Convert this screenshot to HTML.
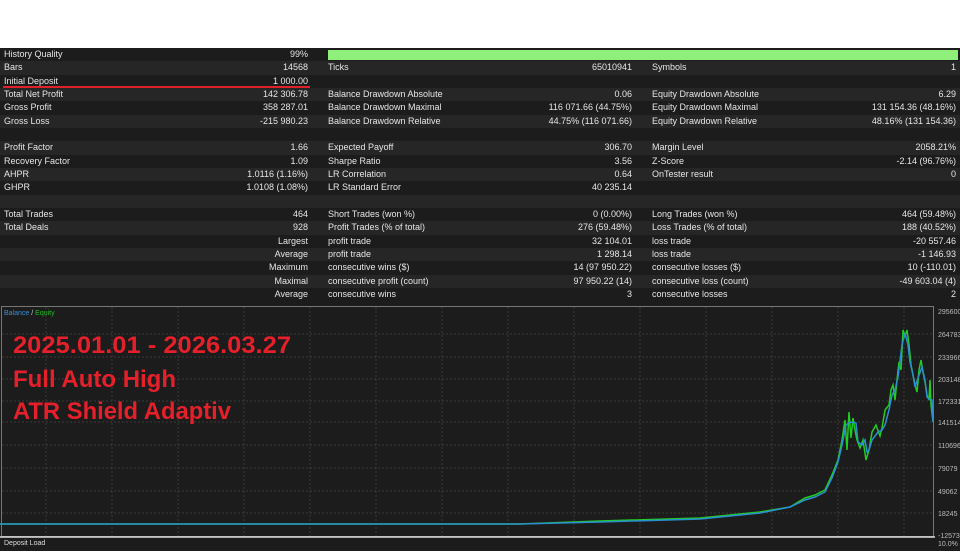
<!DOCTYPE html>
<html><head><meta charset="utf-8"><style>
*{margin:0;padding:0;box-sizing:border-box}
body{width:960px;height:551px;background:#fff;position:relative;overflow:hidden;font-family:"Liberation Sans",sans-serif;font-size:9px;color:#e6e6e6}
.tbl{position:absolute;left:0;top:48px;width:960px;height:256px;background:#1c1c1c}
.r{position:absolute;left:0;width:960px;height:13.33px;line-height:13.33px}
.r.o{background:#262626}
.r span{position:absolute;white-space:nowrap}
.l1{left:4px}.v1{right:652px;text-align:right}
.l2{left:328px}.v2{right:328px;text-align:right}
.l3{left:652px}.v3{right:4px;text-align:right}
.chart{position:absolute;left:0;top:304px;width:960px;height:247px;background:#1c1c1c}
</style></head><body>
<div class="tbl">
<div class="r" style="top:0"><span class="l1">History Quality</span><span class="v1">99%</span><span style="left:328px;top:2px;width:630px;height:10px;background:#8ef07a"></span></div>
<div class="r o" style="top:13.33px"><span class="l1">Bars</span><span class="v1">14568</span><span class="l2">Ticks</span><span class="v2">65010941</span><span class="l3">Symbols</span><span class="v3">1</span></div>
<div class="r" style="top:26.67px"><span class="l1">Initial Deposit</span><span class="v1">1 000.00</span><span style="left:3px;top:11px;width:307px;height:3px;background:#e0202a"></span></div>
<div class="r o" style="top:40px"><span class="l1">Total Net Profit</span><span class="v1">142 306.78</span><span class="l2">Balance Drawdown Absolute</span><span class="v2">0.06</span><span class="l3">Equity Drawdown Absolute</span><span class="v3">6.29</span></div>
<div class="r" style="top:53.33px"><span class="l1">Gross Profit</span><span class="v1">358 287.01</span><span class="l2">Balance Drawdown Maximal</span><span class="v2">116 071.66 (44.75%)</span><span class="l3">Equity Drawdown Maximal</span><span class="v3">131 154.36 (48.16%)</span></div>
<div class="r o" style="top:66.67px"><span class="l1">Gross Loss</span><span class="v1">-215 980.23</span><span class="l2">Balance Drawdown Relative</span><span class="v2">44.75% (116 071.66)</span><span class="l3">Equity Drawdown Relative</span><span class="v3">48.16% (131 154.36)</span></div>
<div class="r" style="top:80px"></div>
<div class="r o" style="top:93.33px"><span class="l1">Profit Factor</span><span class="v1">1.66</span><span class="l2">Expected Payoff</span><span class="v2">306.70</span><span class="l3">Margin Level</span><span class="v3">2058.21%</span></div>
<div class="r" style="top:106.67px"><span class="l1">Recovery Factor</span><span class="v1">1.09</span><span class="l2">Sharpe Ratio</span><span class="v2">3.56</span><span class="l3">Z-Score</span><span class="v3">-2.14 (96.76%)</span></div>
<div class="r o" style="top:120px"><span class="l1">AHPR</span><span class="v1">1.0116 (1.16%)</span><span class="l2">LR Correlation</span><span class="v2">0.64</span><span class="l3">OnTester result</span><span class="v3">0</span></div>
<div class="r" style="top:133.33px"><span class="l1">GHPR</span><span class="v1">1.0108 (1.08%)</span><span class="l2">LR Standard Error</span><span class="v2">40 235.14</span></div>
<div class="r o" style="top:146.67px"></div>
<div class="r" style="top:160px"><span class="l1">Total Trades</span><span class="v1">464</span><span class="l2">Short Trades (won %)</span><span class="v2">0 (0.00%)</span><span class="l3">Long Trades (won %)</span><span class="v3">464 (59.48%)</span></div>
<div class="r o" style="top:173.33px"><span class="l1">Total Deals</span><span class="v1">928</span><span class="l2">Profit Trades (% of total)</span><span class="v2">276 (59.48%)</span><span class="l3">Loss Trades (% of total)</span><span class="v3">188 (40.52%)</span></div>
<div class="r" style="top:186.67px"><span class="v1">Largest</span><span class="l2">profit trade</span><span class="v2">32 104.01</span><span class="l3">loss trade</span><span class="v3">-20 557.46</span></div>
<div class="r o" style="top:200px"><span class="v1">Average</span><span class="l2">profit trade</span><span class="v2">1 298.14</span><span class="l3">loss trade</span><span class="v3">-1 146.93</span></div>
<div class="r" style="top:213.33px"><span class="v1">Maximum</span><span class="l2">consecutive wins ($)</span><span class="v2">14 (97 950.22)</span><span class="l3">consecutive losses ($)</span><span class="v3">10 (-110.01)</span></div>
<div class="r o" style="top:226.67px"><span class="v1">Maximal</span><span class="l2">consecutive profit (count)</span><span class="v2">97 950.22 (14)</span><span class="l3">consecutive loss (count)</span><span class="v3">-49 603.04 (4)</span></div>
<div class="r" style="top:240px"><span class="v1">Average</span><span class="l2">consecutive wins</span><span class="v2">3</span><span class="l3">consecutive losses</span><span class="v3">2</span></div>
</div>
<div class="chart">
<svg width="960" height="247" viewBox="0 304 960 247" style="position:absolute;left:0;top:0">
<g stroke="#3a3a3a" stroke-dasharray="2,2" stroke-width="1">
<line x1="2" y1="334" x2="933" y2="334"/><line x1="2" y1="357" x2="933" y2="357"/><line x1="2" y1="379" x2="933" y2="379"/><line x1="2" y1="401" x2="933" y2="401"/><line x1="2" y1="422" x2="933" y2="422"/><line x1="2" y1="445" x2="933" y2="445"/><line x1="2" y1="468" x2="933" y2="468"/><line x1="2" y1="491" x2="933" y2="491"/><line x1="2" y1="513" x2="933" y2="513"/>
<line x1="46" y1="307" x2="46" y2="536"/><line x1="112" y1="307" x2="112" y2="536"/><line x1="178" y1="307" x2="178" y2="536"/><line x1="244" y1="307" x2="244" y2="536"/><line x1="310" y1="307" x2="310" y2="536"/><line x1="376" y1="307" x2="376" y2="536"/><line x1="442" y1="307" x2="442" y2="536"/><line x1="508" y1="307" x2="508" y2="536"/><line x1="574" y1="307" x2="574" y2="536"/><line x1="640" y1="307" x2="640" y2="536"/><line x1="706" y1="307" x2="706" y2="536"/><line x1="772" y1="307" x2="772" y2="536"/><line x1="838" y1="307" x2="838" y2="536"/><line x1="904" y1="307" x2="904" y2="536"/>
</g>
<rect x="1.5" y="306.5" width="932" height="230" fill="none" stroke="#777" stroke-width="1"/>
<line x1="0" y1="537" x2="935" y2="537" stroke="#ddd" stroke-width="1.5"/>
<polyline fill="none" stroke="#22cc22" stroke-width="1.5" points="0,524 520,524 600,521 700,518 760,512 790,507 805,498 815,495 825,490 832,475 838,460 842,440 845,420 847,450 849,412 851,438 853,418 855,430 857,440 860,448 863,440 866,460 869,450 872,432 876,425 880,436 882,428 885,410 889,405 891,390 893,385 895,400 897,380 899,362 901,370 903,330 905,336 907,330 909,345 911,365 913,375 915,385 917,392 919,370 921,360 923,372 925,382 927,395 929,400 930,380 931,405 933,422"/>
<polyline fill="none" stroke="#2a8fd0" stroke-width="1.5" points="0,524 520,524 600,522 700,519 760,513 790,507 805,500 815,497 825,492 832,478 838,462 842,445 846,425 850,422 856,423 858,442 862,445 865,440 867,452 869,450 872,440 878,432 882,430 885,425 889,410 892,395 895,390 898,377 902,345 905,333 908,345 910,362 913,375 915,387 918,378 922,367 925,380 927,397 930,400 932,400 933,422"/>
<text x="4" y="315" font-size="7" fill="#3b8fd6" font-family="Liberation Sans,sans-serif">Balance <tspan fill="#ccc">/</tspan> <tspan fill="#22bb22">Equity</tspan></text>
<g font-family="Liberation Sans,sans-serif" font-weight="bold" font-size="24" fill="#e5202a">
<text x="13" y="353" textLength="278" lengthAdjust="spacingAndGlyphs">2025.01.01 - 2026.03.27</text>
<text x="13" y="387" textLength="163" lengthAdjust="spacingAndGlyphs">Full Auto High</text>
<text x="13" y="419" textLength="218" lengthAdjust="spacingAndGlyphs">ATR Shield Adaptiv</text>
</g>
<g font-family="Liberation Sans,sans-serif" font-size="7" fill="#bbb">
<text x="938" y="314">295600</text><text x="938" y="337">264783</text><text x="938" y="360">233966</text><text x="938" y="382">203148</text><text x="938" y="404">172331</text><text x="938" y="425">141514</text><text x="938" y="448">110696</text><text x="938" y="471">79079</text><text x="938" y="494">49062</text><text x="938" y="516">18245</text><text x="938" y="538">-12573</text><text x="938" y="546">10.0%</text>
<text x="4" y="545" fill="#ddd">Deposit Load</text>
</g>
</svg>
</div>
</body></html>
